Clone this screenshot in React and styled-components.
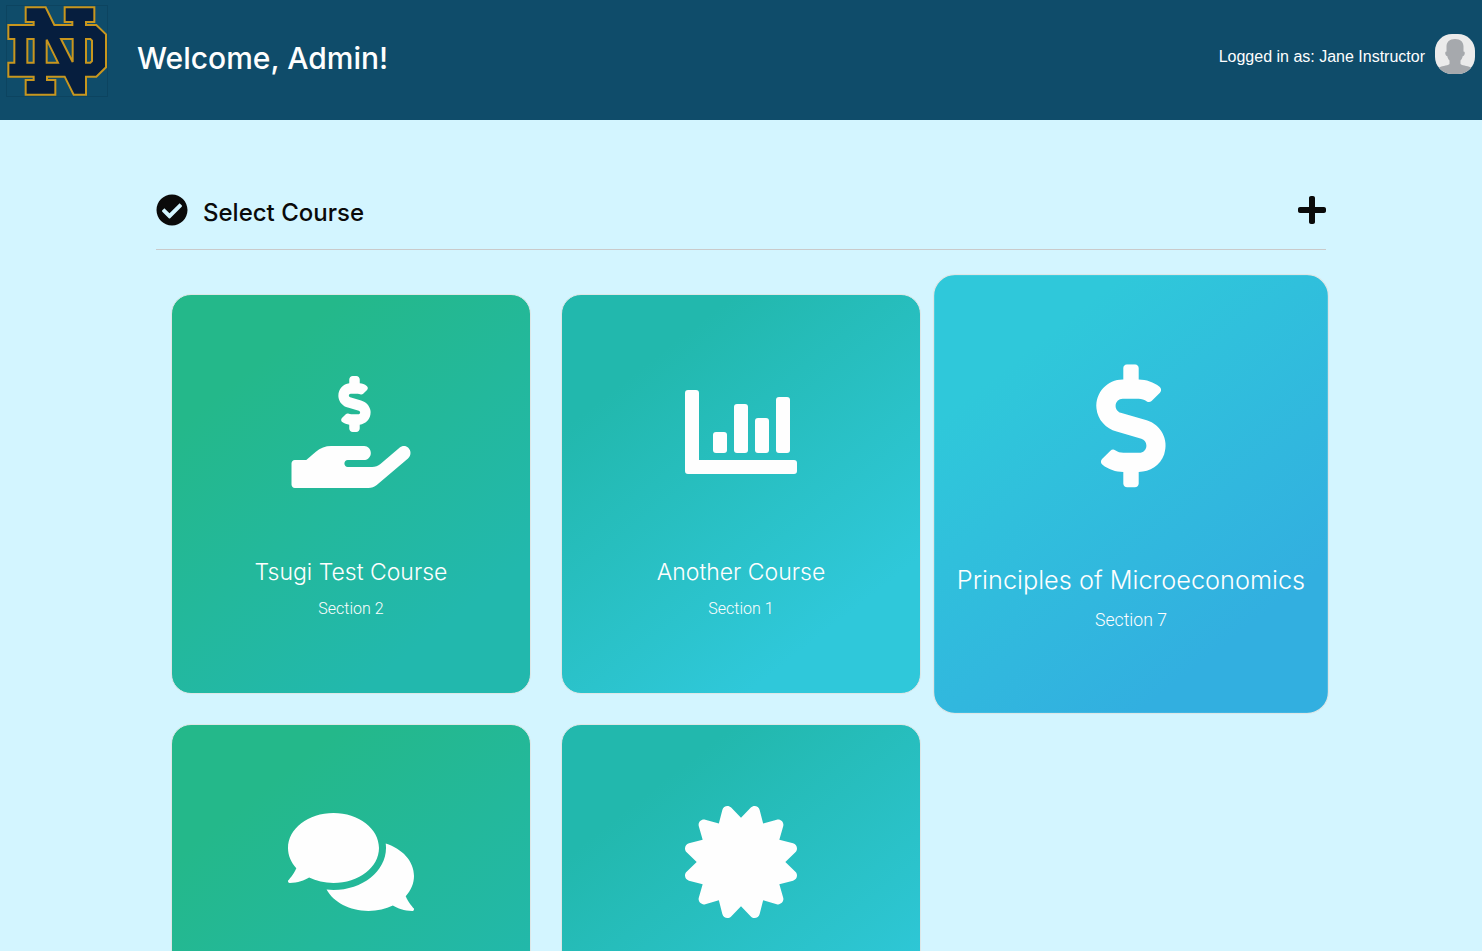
import React from 'react';
import styled, { createGlobalStyle } from 'styled-components';
import { FaCertificate, FaCheckCircle, FaComments, FaDollarSign, FaPlus } from 'react-icons/fa';

const GlobalStyle = createGlobalStyle`
  *, *::before, *::after { box-sizing: border-box; }
  body {
    margin: 0;
    background: #d3f5ff;
    color: #0a0a0a;
    font-family: "Liberation Sans", Arial, sans-serif;
    font-size: 16px;
    line-height: 24px;
  }
  h1, h2, p { margin: 0; }
`;

const Page = styled.div`
  height: 100vh;
  overflow: hidden;
`;

const TopBar = styled.header`
  display: flex;
  align-items: flex-start;
  height: 120px;
  padding: 5px 7px 0 6px;
  background: #0f4c6a;
  color: #fefefe;
`;

const LogoLink = styled.a`
  display: block;
  width: 102px;
  height: 92px;
  svg { display: block; }
`;

const Welcome = styled.h1`
  margin: 31px 0 0 29px;
  font-family: Inter, "Liberation Sans", sans-serif;
  font-size: 30px;
  font-weight: 500;
  line-height: 44px;
`;

const Account = styled.div`
  display: flex;
  align-items: flex-start;
  gap: 10px;
  margin: 29px 0 0 auto;
  svg { display: block; border-radius: 17px; }
`;

const AccountName = styled.span`
  line-height: 46px;
`;

const Content = styled.main`
  max-width: 1200px;
  margin: 0 auto;
  padding: 68px 15px 0;
`;

const SectionBar = styled.div`
  display: flex;
  align-items: flex-start;
  gap: 15px;
  height: 62px;
  padding-top: 6px;
  border-bottom: 1px solid #cacaca;
`;

const SectionTitle = styled.h2`
  flex: 1;
  font-family: Inter, "Liberation Sans", sans-serif;
  font-size: 24px;
  font-weight: 500;
  line-height: 38px;
`;

const AddButton = styled.button`
  padding: 0;
  border: 0;
  background: none;
  color: inherit;
  cursor: pointer;
  svg { display: block; width: 28px; height: 32px; }
`;

const CourseGrid = styled.div`
  display: grid;
  grid-template-columns: repeat(3, 1fr);
  gap: 30px;
  padding: 44px 15px;
`;

const gradients = {
  green: '#24b88a 20%, #22b8ad 80%',
  teal: '#22b8ad 20%, #2fc8da 80%',
  blue: '#2fc8da 20%, #32afe0 80%',
};

const CourseCard = styled.a`
  display: flex;
  flex-direction: column;
  align-items: center;
  height: 400px;
  padding: 81px 8px 0;
  border: 1px solid #dde6e6;
  border-radius: 20px;
  background: linear-gradient(142deg, ${(p) => gradients[p.$tone]}) border-box;
  color: #fefefe;
  text-align: center;
  text-decoration: none;
  transform: ${(p) => (p.$raised ? 'scale(1.1)' : 'none')};
`;

const CardIcon = styled.span`
  display: flex;
  align-items: center;
  height: 112px;
`;

const CardTitle = styled.span`
  margin-top: 66px;
  font-family: Inter, "Liberation Sans", sans-serif;
  font-size: 23px;
  font-weight: 300;
  line-height: 37px;
  white-space: nowrap;
`;

const CardSection = styled.span`
  margin-top: 6px;
  font-family: Roboto, "Liberation Sans", sans-serif;
  font-weight: 300;
`;

function UniversityLogo() {
  return (
    <svg width="102" height="92" viewBox="18 15 306 276" aria-hidden="true">
      <rect x="19.5" y="16.5" width="303" height="273" fill="none" stroke="#0c4460" strokeWidth="3" />
      <path
        d="M77 22H137L163 75H217V66H194V22H283V66H258V75H289L318 103V202L289 230H258V284H221L194 230H141V240H166V284H77V240H101V230H25V188H43V117H25V75H101V66H77ZM82 117V188H101V117ZM140 119V188H174ZM183 117H218V186ZM258 117V188H271L276 183V122L271 117Z"
        fill="#061e3e"
        fillRule="evenodd"
        stroke="#c8961e"
        strokeWidth="6"
      />
    </svg>
  );
}

function Avatar() {
  return (
    <svg width="40" height="40" viewBox="0 0 40 40" role="img" aria-label="Jane Instructor">
      <rect width="40" height="40" fill="#ebebeb" />
      <path
        d="M20 5C14.500 5 11.500 8 11.500 12.500V17.500C10 17.500 10 19 10.500 20.500C11 22 11.500 22 12.200 22C12.700 24 13.500 25.500 14.500 26.500V30C12 32 6 31.500 3 34.500V40H37V34.500C34 31.500 28 32 25.500 30V26.500C26.500 25.500 27.300 24 27.800 22C28.500 22 29 22 29.500 20.500C30 19 30 17.500 28.500 17.500V12.500C28.500 8 25.500 5 20 5Z"
        fill="#a6a9ad"
      />
    </svg>
  );
}

function BarChart() {
  return (
    <svg width="112" height="112" viewBox="0 0 112 112" fill="currentColor" aria-hidden="true">
      <path d="M3 14H11A3 3 0 0 1 14 17V84H109A3 3 0 0 1 112 87V95A3 3 0 0 1 109 98H3A3 3 0 0 1 0 95V17A3 3 0 0 1 3 14Z" />
      <rect x="28" y="56" width="14" height="21" rx="3" />
      <rect x="49" y="28" width="14" height="49" rx="3" />
      <rect x="70" y="42" width="14" height="35" rx="3" />
      <rect x="91" y="21" width="14" height="56" rx="3" />
    </svg>
  );
}

function HandHoldingDollar() {
  return (
    <svg width="120" height="112" viewBox="-2 0 548 512" fill="currentColor" aria-hidden="true">
      <path d="M257.6 144.3l50 14.3c3.6 1 6.1 4.4 6.1 8.1 0 4.6-3.8 8.4-8.4 8.4h-32.800c-3.600 0-7.100-.8-10.300-2.200-4.800-2.200-10.400-1.700-14.100 2l-17.500 17.500c-5.300 5.300-4.700 14.300 1.500 18.400 9.500 6.300 20.400 10.100 31.800 11.500V240c0 8.800 7.200 16 16 16h16c8.800 0 16-7.200 16-16v-17.600c30.300-3.600 53.300-31 49.300-63-2.900-23-20.700-41.300-42.900-47.700l-50-14.300c-3.600-1-6.100-4.400-6.100-8.100 0-4.600 3.800-8.400 8.400-8.400h32.800c3.600 0 7.100.8 10.300 2.200 4.800 2.200 10.400 1.700 14.100-2l17.500-17.500c5.300-5.300 4.700-14.300-1.500-18.400-9.500-6.300-20.400-10.100-31.800-11.500V16c0-8.800-7.200-16-16-16h-16c-8.800 0-16 7.200-16 16v17.600c-30.300 3.600-53.300 31-49.300 63 2.900 23 20.600 41.300 42.900 47.700zm276.300 183.800c-11.200-10.700-28.500-10-40.300 0L406.400 402c-10.700 9.100-24 14-37.800 14H256.900c-8.300 0-15.100-7.200-15.100-16s6.800-16 15.100-16h73.900c15.100 0 29-10.900 31.400-26.600 3.100-20-11.500-37.400-29.800-37.400H181.300c-25.500 0-50.200 9.300-69.900 26.100L67.500 384H15.100C6.800 384 0 391.200 0 400v96c0 8.800 6.800 16 15.100 16H352c13.700 0 27-4.900 37.800-14l142.800-121c14.400-12.100 15.500-35.300 1.300-48.900z" />
    </svg>
  );
}

const courses = [
  { id: 1, title: 'Tsugi Test Course', section: 'Section 2', tone: 'green', icon: <HandHoldingDollar /> },
  { id: 2, title: 'Another Course', section: 'Section 1', tone: 'teal', icon: <BarChart /> },
  { id: 3, title: 'Principles of Microeconomics', section: 'Section 7', tone: 'blue', icon: <FaDollarSign size={112} />, raised: true },
  { id: 4, label: 'Discussion course', tone: 'green', icon: <FaComments size={126} /> },
  { id: 5, label: 'Certificate course', tone: 'teal', icon: <FaCertificate size={112} /> },
];

export default function App() {
  return (
    <Page>
      <GlobalStyle />
      <TopBar>
        <LogoLink href="#home" aria-label="Home">
          <UniversityLogo />
        </LogoLink>
        <Welcome>Welcome, Admin!</Welcome>
        <Account>
          <AccountName>Logged in as: Jane Instructor</AccountName>
          <Avatar />
        </Account>
      </TopBar>
      <Content>
        <SectionBar>
          <FaCheckCircle size={32} aria-hidden="true" />
          <SectionTitle>Select Course</SectionTitle>
          <AddButton type="button" aria-label="Add course">
            <FaPlus />
          </AddButton>
        </SectionBar>
        <CourseGrid>
          {courses.map((c) => (
            <CourseCard key={c.id} href={`#course-${c.id}`} aria-label={c.label} $tone={c.tone} $raised={c.raised}>
              <CardIcon>{c.icon}</CardIcon>
              {c.title && <CardTitle>{c.title}</CardTitle>}
              {c.section && <CardSection>{c.section}</CardSection>}
            </CourseCard>
          ))}
        </CourseGrid>
      </Content>
    </Page>
  );
}
